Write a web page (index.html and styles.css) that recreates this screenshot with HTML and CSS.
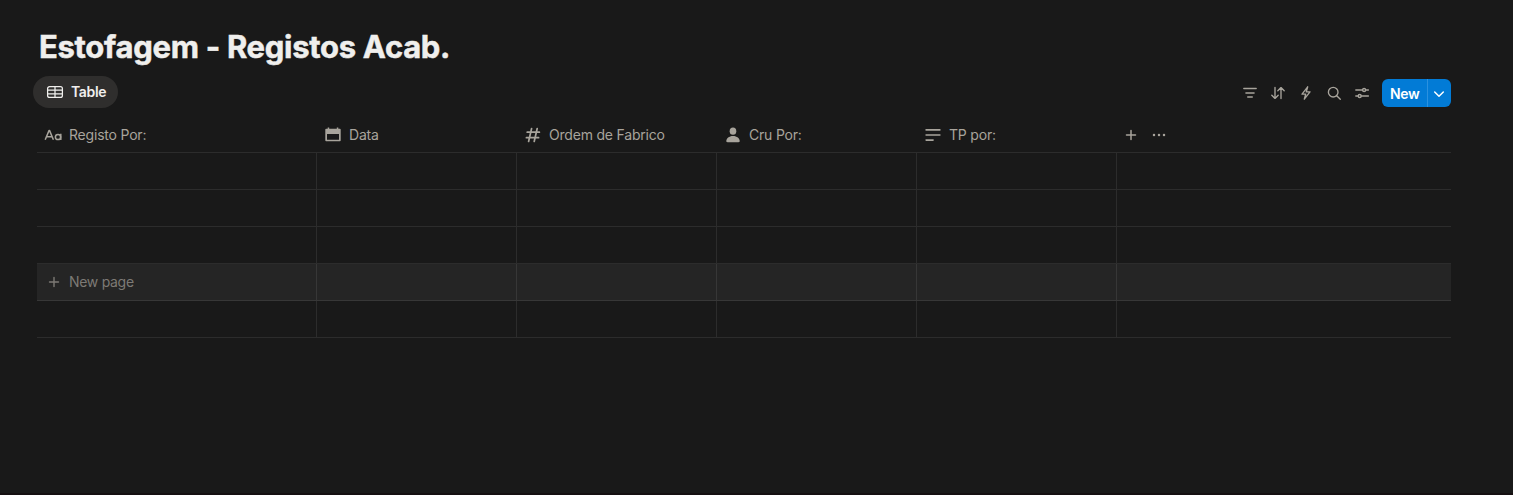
FILE: index.html
```html
<!DOCTYPE html>
<html lang="pt">
<head>
<meta charset="utf-8">
<title>Estofagem - Registos Acab.</title>
<link rel="stylesheet" href="styles.css">
</head>
<body>
<main class="page">
  <h1 class="title">Estofagem - Registos Acab.</h1>
  <div class="bar">
    <div class="tab">
      <svg width="18" height="16" viewBox="0 0 18 16" fill="none" stroke="currentColor" stroke-width="1.25"><rect x="1.6" y="2.6" width="14.8" height="10.8" rx="2"/><path d="M1.6 6.2h14.8M1.6 9.8h14.8M9 2.6v10.8"/></svg>
      <span>Table</span>
    </div>
    <div class="tools">
      <svg class="tool" viewBox="0 0 16 16"><path d="M1.8 3.5h12.4M3.9 8h8.2M5.7 12h4.6"/></svg>
      <svg class="tool" viewBox="0 0 16 16"><path d="M5 2.4v10.8M1.8 10.2L5 13.4l3.2-3.2M11 13.6V2.8M7.8 5.8L11 2.6l3.2 3.2"/></svg>
      <svg class="tool" viewBox="0 0 16 16"><path d="M9.7 1.8L4 9.1h3.7L6.3 14.2 12 6.9H8.3z"/></svg>
      <svg class="tool" viewBox="0 0 16 16"><circle cx="7.2" cy="7.2" r="4.8"/><path d="M10.7 10.7l3.6 3.6"/></svg>
      <svg class="tool" viewBox="0 0 16 16"><path d="M1.8 5h6.7M11.7 5h2.7M1.8 11h2.3M7.3 11h7.1"/><circle cx="10.1" cy="5" r="1.5"/><circle cx="5.7" cy="11" r="1.5"/></svg>
    </div>
    <div class="new">
      <span class="new-label">New</span>
      <span class="new-more"><svg width="12" height="12" viewBox="0 0 12 12" fill="none" stroke="currentColor" stroke-width="1.5" stroke-linecap="round" stroke-linejoin="round"><path d="M1.7 4L6 8.3 10.3 4"/></svg></span>
    </div>
  </div>
  <div class="table">
    <div class="row head">
      <div class="col"><svg class="icon" viewBox="0 0 18 16"><g fill="none" stroke="currentColor" stroke-width="1.5" stroke-linejoin="round"><path d="M1.2 12.8L5 3.6h.6l3.8 9.2M2.6 9.8H8"/><circle cx="14" cy="10" r="2.6"/><path d="M16.8 6.7v6.2"/></g></svg><span>Registo Por:</span></div>
      <div class="col"><svg class="icon" viewBox="0 0 18 16"><path fill="currentColor" fill-rule="evenodd" d="M3.7.5h1.5v1.2h7.6V.5h1.5v1.2h1.6c.4 0 .8.3.8.8v11c0 .5-.4.8-.8.8H2.1c-.4 0-.8-.3-.8-.8v-11c0-.5.4-.8.8-.8h1.6zM3 6.9v5.9h12V6.9z"/></svg><span>Data</span></div>
      <div class="col"><svg class="icon" viewBox="0 0 18 16"><path fill="none" stroke="currentColor" stroke-width="1.7" stroke-linecap="round" d="M7.6 1.5L4.6 14.5M13.2 1.5l-3 13M3.2 5.2h12.2M2.4 10.7h12.2"/></svg><span>Ordem de Fabrico</span></div>
      <div class="col"><svg class="icon" viewBox="0 0 18 16"><g fill="currentColor"><ellipse cx="9" cy="4.2" rx="3.3" ry="3.6"/><path d="M2.3 14.1C2.3 11.4 5 9 9 9s6.7 2.4 6.7 5.1c0 .8-.5 1.2-1.2 1.2h-11c-.7 0-1.2-.4-1.2-1.2z"/></g></svg><span>Cru Por:</span></div>
      <div class="col"><svg class="icon" viewBox="0 0 18 16"><path fill="none" stroke="currentColor" stroke-width="1.6" stroke-linecap="round" d="M2.1 2.9h13.8M2.1 8h13.8M2.1 13.1h7"/></svg><span>TP por:</span></div>
      <div class="col actions">
        <svg width="16" height="16" viewBox="0 0 16 16"><path fill="none" stroke="currentColor" stroke-width="1.5" stroke-linecap="round" d="M8 3.5v9M3.5 8h9"/></svg>
        <svg width="16" height="16" viewBox="0 0 16 16" fill="currentColor"><circle cx="3" cy="8" r="1.25"/><circle cx="8" cy="8" r="1.25"/><circle cx="13" cy="8" r="1.25"/></svg>
      </div>
    </div>
    <div class="row"><div class="cell"></div><div class="cell"></div><div class="cell"></div><div class="cell"></div><div class="cell"></div><div class="cell"></div></div>
    <div class="row"><div class="cell"></div><div class="cell"></div><div class="cell"></div><div class="cell"></div><div class="cell"></div><div class="cell"></div></div>
    <div class="row"><div class="cell"></div><div class="cell"></div><div class="cell"></div><div class="cell"></div><div class="cell"></div><div class="cell"></div></div>
    <div class="row hover"><div class="cell new-page"><svg width="16" height="16" viewBox="0 0 16 16"><path fill="none" stroke="currentColor" stroke-width="1.4" stroke-linecap="round" d="M8 3.5v9M3.5 8h9"/></svg><span>New page</span></div><div class="cell"></div><div class="cell"></div><div class="cell"></div><div class="cell"></div><div class="cell"></div></div>
    <div class="row"><div class="cell"></div><div class="cell"></div><div class="cell"></div><div class="cell"></div><div class="cell"></div><div class="cell"></div></div>
  </div>
</main>
</body>
</html>
```
FILE: styles.css
```css
* { box-sizing: border-box; }

body {
  margin: 0;
  background: #191919;
  color: #f0efed;
  font-family: Inter, "Liberation Sans", sans-serif;
  font-size: 14px;
  line-height: 20px;
  letter-spacing: -0.2px;
}

svg { display: block; flex: none; }

.page {
  height: 495px;
  padding: 27px 62px 0 37px;
  border-bottom: 2px solid #150f11;
}

.title {
  margin: 0;
  padding-left: 2px;
  font-size: 31px;
  line-height: 40px;
  font-weight: 700;
  letter-spacing: -0.3px;
  -webkit-text-stroke: 0.5px currentColor;
  white-space: nowrap;
}

.bar {
  display: flex;
  align-items: center;
  height: 32px;
  margin: 9px 0 0 -4px;
}

.tab {
  display: flex;
  align-items: center;
  gap: 7px;
  width: 85px;
  height: 32px;
  padding-left: 13px;
  border-radius: 16px;
  background: #2f2e2d;
  font-weight: 600;
  letter-spacing: -0.35px;
}

.tools {
  display: flex;
  gap: 12px;
  margin: 2px 12px 0 auto;
  color: #a8a49c;
}

.tool {
  width: 16px;
  height: 16px;
  fill: none;
  stroke: currentColor;
  stroke-width: 1.35;
  stroke-linecap: round;
  stroke-linejoin: round;
}

.new {
  display: flex;
  width: 69px;
  height: 28px;
  margin-top: 2px;
  border-radius: 6px;
  background: #027bd6;
  color: #fff;
  font-weight: 600;
  line-height: 29px;
  letter-spacing: -0.4px;
}

.new-label {
  width: 46px;
  padding-left: 8px;
  border-right: 1px solid #2b91df;
}

.new-more {
  display: flex;
  flex: 1;
  align-items: center;
  justify-content: center;
  padding: 2px 1px 0 0;
}

.table { margin-top: 10px; }

.row {
  display: grid;
  grid-template-columns: 280px 200px 200px 200px 200px 1fr;
  height: 37px;
  border-bottom: 1px solid #2c2c2c;
}

.head {
  height: 35px;
  color: #a8a49c;
}

.col {
  display: flex;
  align-items: center;
  gap: 7px;
  padding-left: 7px;
}

.icon { width: 18px; height: 16px; }

.actions { gap: 12px; padding-left: 6px; }

.cell { border-right: 1px solid #2c2c2c; }
.cell:last-child { border-right: 0; }

.hover {
  background: #252525;
  border-color: #373737;
}

.hover .cell { border-color: #373737; }

.new-page {
  display: flex;
  align-items: center;
  gap: 7px;
  padding-left: 9px;
  color: #7d7a75;
  letter-spacing: -0.3px;
}
```
